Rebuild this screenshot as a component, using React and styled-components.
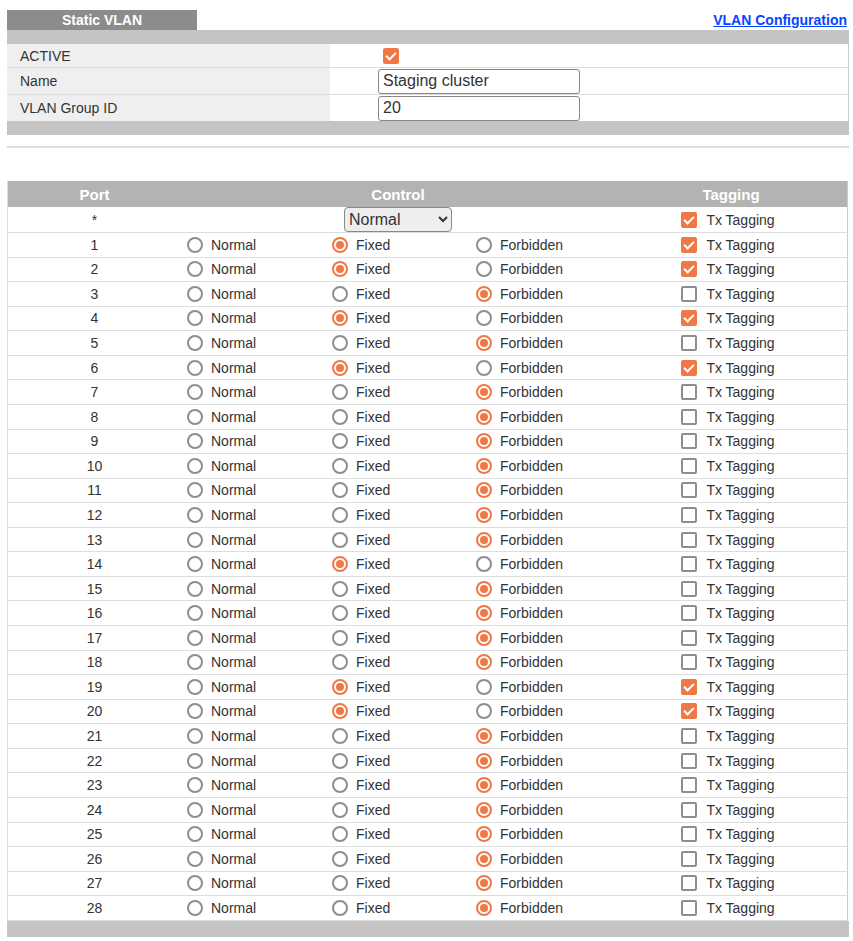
import React from 'react';
import styled, { createGlobalStyle } from 'styled-components';

const Global = createGlobalStyle`
  body { margin: 0; padding: 10px 4px 0 7px; font-family: "Liberation Sans", Arial, sans-serif; font-size: 14px; color: #333; background: #fff; }
  input[type=checkbox], input[type=radio] {
    appearance: none; margin: 0; width: 16px; height: 16px; box-sizing: border-box;
    border: 2px solid #8d8d96; background: #fff; flex: none; position: relative;
  }
  input[type=radio] { border-radius: 50%; }
  input[type=radio]:checked { border-color: #f07846; }
  input[type=radio]:checked::after {
    content: ''; position: absolute; left: 2px; top: 2px; width: 8px; height: 8px; border-radius: 50%; background: #f07846;
  }
  input[type=checkbox] { border-radius: 2px; }
  input[type=checkbox]:checked { background: #f07846; border-color: #f07846; }
  input[type=checkbox]:checked::after {
    content: ''; position: absolute; left: 3px; top: 0px; width: 4px; height: 8px;
    border: solid #fff; border-width: 0 2px 2px 0; transform: rotate(45deg);
  }
`;

const Top = styled.div`
  display: flex;
  justify-content: space-between;
  align-items: flex-end;
  width: 840px;
`;

const Tab = styled.div`
  width: 190px;
  height: 20px;
  background: #8c8c8c;
  color: #fff;
  font-weight: bold;
  font-size: 14px;
  display: flex;
  align-items: center;
  justify-content: center;
`;

const Link = styled.a`
  color: #0645ff;
  font-weight: bold;
  font-size: 14px;
  text-decoration: underline;
  padding-bottom: 2px;
`;

const Bar = styled.div`
  height: ${p => p.h}px;
  background: #c4c4c4;
  width: 842px;
`;

const FormRow = styled.div`
  display: grid;
  grid-template-columns: 323px 1fr;
  width: 841px;
  border-right: 1px solid #ccc;
  border-bottom: ${p => (p.last ? 'none' : '1px solid #ddd')};
  height: ${p => p.h}px;
`;

const Label = styled.div`
  background: #efefef;
  display: flex;
  align-items: center;
  padding-left: 13px;
`;

const Value = styled.div`
  display: flex;
  align-items: center;
  padding-left: 48px;
`;

const Text = styled.input`
  width: 202px;
  height: 25px;
  box-sizing: border-box;
  border: 1px solid #888;
  border-radius: 3px;
  font: 16px "Liberation Sans", Arial, sans-serif;
  color: #333;
  padding: 0 4px;
`;

const Divider = styled.div`
  width: 842px;
  height: 2px;
  background: #ddd;
  margin: 11px 0 33px;
`;

const Grid = styled.div`
  display: grid;
  grid-template-columns: 173px 145px 144px 145px 1fr;
  width: 841px;
  border-right: 1px solid #ccc;
  border-left: 1px solid #ddd;
  align-items: center;
  height: ${p => p.h}px;
  border-bottom: ${p => (p.head ? 'none' : '1px solid #ddd')};
  background: ${p => (p.head ? '#b3b3b3' : '#fff')};
  box-sizing: border-box;
`;

const Head = styled.div`
  color: #fff;
  font-weight: bold;
  font-size: 15px;
  text-align: center;
  grid-column: ${p => p.span || 'auto'};
`;

const Port = styled.div`
  text-align: center;
`;

const Opt = styled.label`
  display: flex;
  align-items: center;
  gap: 8px;
  padding-left: 6px;
`;

const Tag = styled.label`
  display: flex;
  align-items: center;
  justify-content: center;
  gap: 9px;
  padding-right: 6px;
`;

const Select = styled.select`
  grid-column: 2 / 5;
  justify-self: center;
  width: 108px;
  height: 25px;
  border: 1px solid #888;
  border-radius: 4px;
  background: #eee;
  font: 16px "Liberation Sans", Arial, sans-serif;
  color: #333;
`;

const control = 'FFXFXFXXXXXXXFXXXXFFXXXXXXXX';
const tagged = [1, 2, 4, 6, 19, 20];

export default function App() {
  return (
    <>
      <Global />
      <Top>
        <Tab>Static VLAN</Tab>
        <Link href="#">VLAN Configuration</Link>
      </Top>
      <Bar h={14} />
      <FormRow h={23}>
        <Label>ACTIVE</Label>
        <Value><input type="checkbox" defaultChecked style={{ marginLeft: 5 }} /></Value>
      </FormRow>
      <FormRow h={26}>
        <Label>Name</Label>
        <Value><Text defaultValue="Staging cluster" /></Value>
      </FormRow>
      <FormRow h={26} last>
        <Label>VLAN Group ID</Label>
        <Value><Text defaultValue="20" /></Value>
      </FormRow>
      <Bar h={14} />
      <Divider />
      <Grid head h={26}>
        <Head>Port</Head>
        <Head span="2 / 5">Control</Head>
        <Head>Tagging</Head>
      </Grid>
      <Grid h={26}>
        <Port>*</Port>
        <Select defaultValue="Normal">
          <option>Normal</option>
          <option>Fixed</option>
          <option>Forbidden</option>
        </Select>
        <Tag><input type="checkbox" defaultChecked />Tx Tagging</Tag>
      </Grid>
      {control.split('').map((s, i) => (
        <Grid key={i} h={24.57}>
          <Port>{i + 1}</Port>
          <Opt><input type="radio" name={'p' + i} />Normal</Opt>
          <Opt><input type="radio" name={'p' + i} defaultChecked={s === 'F'} />Fixed</Opt>
          <Opt><input type="radio" name={'p' + i} defaultChecked={s === 'X'} />Forbidden</Opt>
          <Tag><input type="checkbox" defaultChecked={tagged.includes(i + 1)} />Tx Tagging</Tag>
        </Grid>
      ))}
      <Bar h={16} />
    </>
  );
}
